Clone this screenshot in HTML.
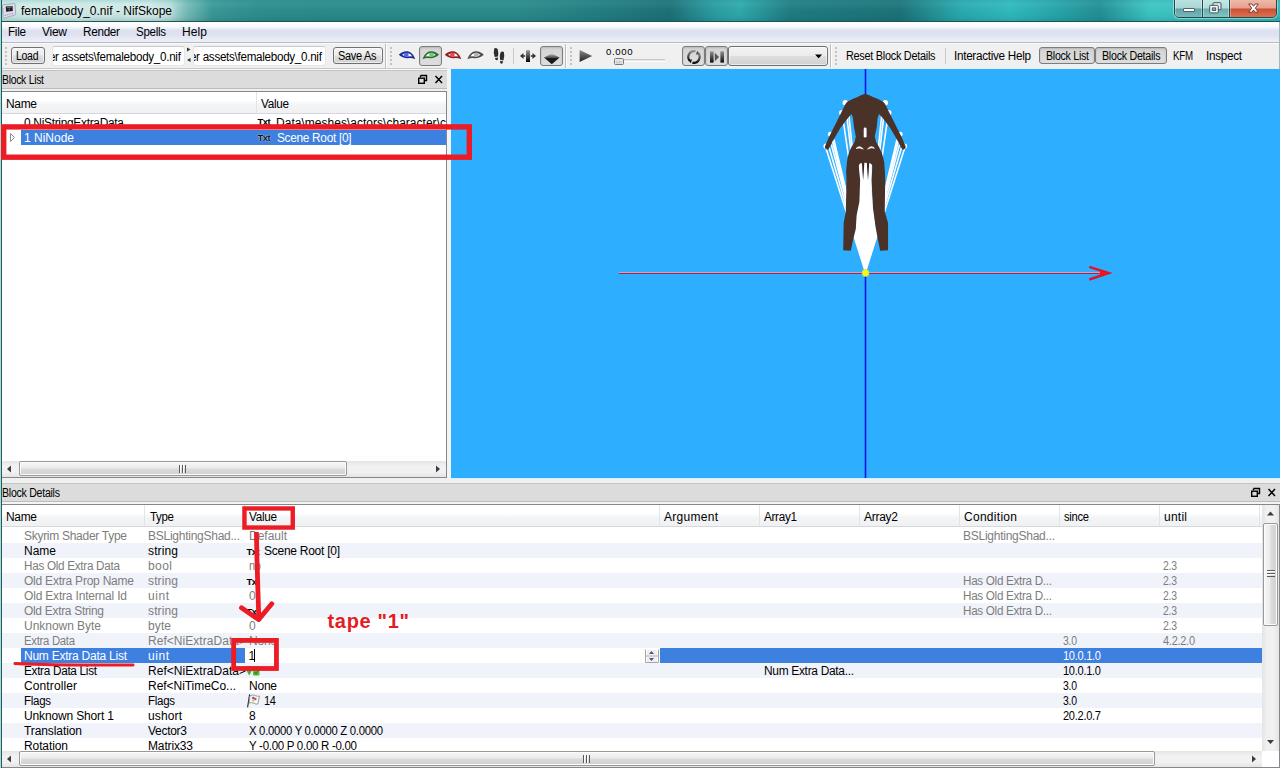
<!DOCTYPE html>
<html><head><meta charset="utf-8"><title>femalebody_0.nif - NifSkope</title>
<style>
html,body{margin:0;padding:0}
body{width:1280px;height:768px;position:relative;overflow:hidden;background:#f0f0f0;font-family:"Liberation Sans",sans-serif;font-size:12px}
.a{position:absolute}
.t{position:absolute;white-space:pre}
.btn{position:absolute;box-sizing:border-box;border:1px solid #707070;border-radius:3px;background:linear-gradient(#f4f4f4 0%,#ececec 48%,#dedede 52%,#d2d2d2 100%);box-shadow:inset 0 0 0 1px rgba(255,255,255,.55)}
.pbtn{position:absolute;box-sizing:border-box;border:1px solid #7c7c7c;border-radius:3px;background:linear-gradient(#d4d4d4,#dedede);box-shadow:inset 0 1px 2px #b8b8b8}
.edit{position:absolute;box-sizing:border-box;background:#fff;border:1px solid #e3e6ea;border-top-color:#c6c9cf;border-radius:3px;overflow:hidden}
.hdr{position:absolute;background:linear-gradient(#fff 0%,#fff 40%,#f3f4f6 60%,#f0f1f3 100%);border-bottom:1px solid #d6d8db;box-sizing:border-box}
.sbh{position:absolute;background:linear-gradient(#e4e4e4,#f1f1f1 30%,#f1f1f1 70%,#e4e4e4)}
.thh{position:absolute;box-sizing:border-box;border:1px solid #989898;border-radius:2px;background:linear-gradient(#f6f6f6 0%,#ebebeb 48%,#dcdcdc 52%,#d0d0d0 100%);box-shadow:inset 0 0 0 1px #fcfcfc}
.thv{position:absolute;box-sizing:border-box;border:1px solid #989898;border-radius:2px;background:linear-gradient(90deg,#f6f6f6 0%,#ebebeb 48%,#dcdcdc 52%,#d0d0d0 100%);box-shadow:inset 0 0 0 1px #fcfcfc}
.hd{position:absolute;width:2px;background:repeating-linear-gradient(#c2c2c2 0,#c2c2c2 2px,transparent 2px,transparent 4px)}
</style></head><body>
<!-- ================= TITLE BAR ================= -->
<div class="a" style="left:0;top:0;width:1280px;height:22px;background:linear-gradient(90deg,#3c9a98 0px,#3c9a98 200px,#2d8d8d 260px,#2a8a8a 330px,#2b8a8b 520px,#237d80 600px,#1e7076 670px,#2a9da3 715px,#2fa8ad 740px,#1f7c82 790px,#1c7278 900px,#2aa9ae 960px,#30b9bd 1010px,#27a3a8 1060px,#238f95 1100px,#3ec4c4 1150px,#36b5b6 1280px)"></div>
<div class="a" style="left:0;top:0;width:230px;height:22px;background:linear-gradient(90deg,rgba(208,234,231,.97) 0,rgba(208,234,231,.97) 150px,rgba(200,230,227,.85) 170px,rgba(180,222,218,.45) 188px,rgba(160,210,208,0) 212px)"></div>
<div class="a" style="left:0;top:0;width:1280px;height:22px;background:linear-gradient(rgba(60,170,165,.2) 0,rgba(255,255,255,.06) 4px,rgba(255,255,255,0) 10px,rgba(0,60,60,.06) 17px,rgba(0,60,60,.16) 21px)"></div>
<div class="a" style="left:0;top:21px;width:1280px;height:1px;background:#1c5557"></div>
<!-- app icon -->
<svg class="a" style="left:0;top:0" width="20" height="22" viewBox="0 0 20 22"><path d="M2.300 5.600 Q2.300 4.800 3.200 4.700 L14 3.500 Q15.100 3.400 15.200 4.400 L15.600 13.800 Q15.600 14.700 14.700 15 L4.300 18.200 Q3.300 18.400 3.200 17.400 Z" fill="#dcdcec" stroke="#9c9cb4" stroke-width=".8"/><path d="M5.800 6.600 L12.600 5.900 L12.800 10.900 L6.100 11.700Z" fill="#1c1c20"/><path d="M7 6.700 L11.800 6.200 L11.850 7.600 L7.050 8.150Z" fill="#4d8a4a"/><path d="M8.600 8.400 L10 8.250 L10.050 10.300 L8.650 10.450Z" fill="#5a5a62"/><g fill="#b48ab0"><circle cx="5.400" cy="15.400" r=".7"/><circle cx="7.800" cy="14.700" r=".7"/><circle cx="10.200" cy="14" r=".7"/><circle cx="12.500" cy="13.400" r=".7"/></g><path d="M2.400 8.500 h1.200 M2.500 10.500 h1.200 M2.600 12.500 h1.200" stroke="#9c9cb4" stroke-width=".7"/></svg>
<!-- window buttons -->
<div class="a" style="left:1174px;top:-4px;width:103px;height:22px;box-sizing:border-box;border:1px solid #1f4a4e;border-radius:0 0 5px 5px;overflow:hidden;box-shadow:0 0 0 1px rgba(255,255,255,.4)">
 <div class="a" style="left:0;top:0;width:27px;height:21px;background:linear-gradient(#c4e6e4 0,#a9d6d5 11px,#5fa3a5 12px,#7bbcbc 21px);border-right:1px solid #1f4a4e;box-shadow:inset 0 0 0 1px rgba(255,255,255,.35)"></div>
 <div class="a" style="left:28px;top:0;width:26px;height:21px;background:linear-gradient(#c9eae8 0,#b2dddc 11px,#68adaf 12px,#86c6c5 21px);border-right:1px solid #1f4a4e;box-shadow:inset 0 0 0 1px rgba(255,255,255,.35)"></div>
 <div class="a" style="left:55px;top:0;width:47px;height:21px;background:linear-gradient(#f2c2b4 0,#e5a08e 11px,#cc4f33 12px,#dd7555 21px);box-shadow:inset 0 0 0 1px rgba(255,255,255,.3)"></div>
</div>
<svg class="a" style="left:1174px;top:0" width="104" height="18" viewBox="0 0 104 18">
 <rect x="9.500" y="8.500" width="11" height="3" rx="0.500" fill="#fff" stroke="#50646a" stroke-width="1"/>
 <rect x="39" y="2.700" width="8" height="7" rx=".8" fill="#e8f2f2" stroke="#3e5358" stroke-width="1"/>
 <rect x="35.700" y="5.300" width="8.600" height="7.600" rx=".8" fill="#f4fafa" stroke="#3e5358" stroke-width="1"/>
 <rect x="38.300" y="7.900" width="3.400" height="2.600" fill="#7fb5b7" stroke="#3e5358" stroke-width=".9"/>
 <path d="M74.700 4 L77.900 4 L79.500 6.300 L81.100 4 L84.300 4 L81.300 8.100 L84.300 12.200 L81.100 12.200 L79.500 9.900 L77.900 12.200 L74.700 12.200 L77.700 8.100 Z" fill="#fff" stroke="#6a3028" stroke-width=".9" stroke-linejoin="round"/>
</svg>
<!-- ================= MENU BAR ================= -->
<div class="a" style="left:2px;top:22px;width:1277px;height:20px;background:linear-gradient(#fff 0,#fbfbfd 4px,#e9ecf6 7px,#dde1f0 8px,#dde1f0 13px,#e6e9f4 16px,#eef0f8 20px)"></div>
<div class="a" style="left:2px;top:42px;width:1277px;height:1px;background:#b9bbc4"></div>
<!-- ================= TOOLBAR ================= -->
<div class="a" style="left:2px;top:43px;width:1277px;height:26px;background:#f0f0f0"></div>
<div class="a" style="left:2px;top:43px;width:1277px;height:1px;background:#fafafa"></div>
<div class="hd" style="left:5px;top:47px;height:18px"></div>
<div class="btn" style="left:11px;top:47px;width:34px;height:17px"></div>
<div class="edit" style="left:52px;top:46px;width:133px;height:20px"><span class="a" style="right:3.500px;top:3.200px;white-space:pre;line-height:14px;letter-spacing:-.3px;transform:scaleX(.971);transform-origin:100% 0">er assets\femalebody_0.nif</span></div>
<svg class="a" style="left:185px;top:46px" width="7" height="19" viewBox="0 0 7 19"><path d="M2 1.500 L5.500 3.500 L2 5.500Z M5.500 12 L2 14 L5.500 16Z" fill="#333"/></svg>
<div class="edit" style="left:193px;top:46px;width:133px;height:20px"><span class="a" style="right:3.700px;top:3.200px;white-space:pre;line-height:14px;letter-spacing:-.3px;transform:scaleX(.971);transform-origin:100% 0">er assets\femalebody_0.nif</span></div>
<div class="btn" style="left:333px;top:47px;width:50px;height:17px"></div>
<div class="a" style="left:385px;top:44px;width:1px;height:24px;background:#bebebe"></div><div class="a" style="left:386px;top:44px;width:1px;height:24px;background:#fcfcfc"></div>
<div class="hd" style="left:390px;top:47px;height:18px"></div>
<svg class="a" style="left:392px;top:44px" width="120" height="24" viewBox="392 44 120 24"><g transform="translate(399,51.2)"><path d="M-0.200 3.600 Q3.500 -0.500 8.500 0 Q13.800 0.800 16.300 8 Q12.500 6.200 8.500 7 Q3.500 7 -0.200 3.600Z" fill="#1c2b94"/><path d="M3 3.600 Q5.200 1.700 8.500 1.700 Q11.600 2 13.300 5.200 Q11 4.700 8.500 5.200 Q5.200 5.400 3 3.600Z" fill="#fff"/><ellipse cx="7.300" cy="3.500" rx="2.400" ry="2.300" fill="#5068ea"/></g></svg><div class="pbtn" style="left:419px;top:46px;width:23px;height:20px"></div><svg class="a" style="left:392px;top:44px" width="120" height="24" viewBox="392 44 120 24"><g transform="translate(438.8,51.2) scale(-1,1)"><path d="M-0.200 3.600 Q3.500 -0.500 8.500 0 Q13.800 0.800 16.300 8 Q12.500 6.200 8.500 7 Q3.500 7 -0.200 3.600Z" fill="#2d6a36"/><path d="M3 3.600 Q5.200 1.700 8.500 1.700 Q11.600 2 13.300 5.200 Q11 4.700 8.500 5.200 Q5.200 5.400 3 3.600Z" fill="#fff"/><ellipse cx="7.300" cy="3.500" rx="2.400" ry="2.300" fill="#5fd071"/></g><g transform="translate(445,51.2)"><path d="M-0.200 3.600 Q3.500 -0.500 8.500 0 Q13.800 0.800 16.300 8 Q12.500 6.200 8.500 7 Q3.500 7 -0.200 3.600Z" fill="#8e1c1c"/><path d="M3 3.600 Q5.200 1.700 8.500 1.700 Q11.600 2 13.300 5.200 Q11 4.700 8.500 5.200 Q5.200 5.400 3 3.600Z" fill="#fff"/><ellipse cx="7.300" cy="3.500" rx="2.400" ry="2.300" fill="#ea4a4a"/></g><g transform="translate(483.6,51.2) scale(-1,1)"><path d="M-0.200 3.600 Q3.500 -0.500 8.500 0 Q13.800 0.800 16.300 8 Q12.500 6.200 8.500 7 Q3.500 7 -0.200 3.600Z" fill="#4c4c4c"/><path d="M3 3.600 Q5.200 1.700 8.500 1.700 Q11.600 2 13.300 5.200 Q11 4.700 8.500 5.200 Q5.200 5.400 3 3.600Z" fill="#fff"/><ellipse cx="7.300" cy="3.500" rx="2.400" ry="2.300" fill="#b4b4b4"/></g><g fill="#2e2e2e"><path d="M494.200 48.600 Q496 47.200 497.600 49.200 Q498.800 52.800 498 56.400 L494.700 57 Q493.200 52.400 494.200 48.600Z"/><path d="M494.900 58 L498 57.400 Q498.400 59.800 497 60.300 Q495.200 60.400 494.900 58Z"/><path d="M503.900 52 Q502.100 50.600 500.500 52.600 Q499.300 56.200 500.100 59.800 L503.400 60.400 Q504.900 55.800 503.900 52Z"/><path d="M503.200 61.400 L500.100 60.800 Q499.700 63.200 501.100 63.700 Q502.900 63.800 503.200 61.400Z"/></g></svg>
<div class="a" style="left:513px;top:48px;width:1px;height:16px;background:#c8c8c8"></div>
<svg class="a" style="left:516px;top:44px" width="24" height="24" viewBox="516 44 24 24"><defs><linearGradient id="gk" x1="0" y1="0" x2="0" y2="1"><stop offset="0" stop-color="#9a9a9a"/><stop offset="1" stop-color="#000"/></linearGradient></defs><rect x="526" y="50.200" width="4" height="11.800" fill="url(#gk)"/><path d="M520 56 L523.500 53 L523.500 55.200 L525.200 55.200 L525.200 56.800 L523.500 56.800 L523.500 59Z" fill="#333"/><path d="M536 56 L532.500 53 L532.500 55.200 L530.800 55.200 L530.800 56.800 L532.500 56.800 L532.500 59Z" fill="#333"/></svg><div class="pbtn" style="left:540px;top:46px;width:23px;height:20px"></div><svg class="a" style="left:540px;top:46px" width="23" height="20" viewBox="540 46 23 20"><defs><linearGradient id="gd" x1="0" y1="0" x2="0" y2="1"><stop offset="0" stop-color="#c8c8c8"/><stop offset="1" stop-color="#4a4a4a"/></linearGradient></defs><path d="M551.800 53.600 L559.600 57.600 L544 57.600Z" fill="url(#gd)"/><path d="M544 57.600 L559.600 57.600 L551.800 64.300Z" fill="#1a1a1a"/></svg>
<div class="a" style="left:565px;top:44px;width:1px;height:24px;background:#bebebe"></div><div class="a" style="left:566px;top:44px;width:1px;height:24px;background:#fcfcfc"></div>
<div class="hd" style="left:570px;top:47px;height:18px"></div>
<svg class="a" style="left:576px;top:44px" width="100" height="24" viewBox="576 44 100 24"><defs><linearGradient id="gp" x1="0" y1="0" x2="0" y2="1"><stop offset="0" stop-color="#8a8a8a"/><stop offset="1" stop-color="#222"/></linearGradient></defs><path d="M579.600 50 L592.200 56 L579.600 62Z" fill="url(#gp)"/><rect x="619" y="59.500" width="46" height="1" fill="#a4a4a4"/><rect x="619" y="60.500" width="46" height="1.500" fill="#fdfdfd"/><rect x="614.500" y="58.500" width="9" height="6" rx="1" fill="#e6e6e6" stroke="#7a7a7a"/><rect x="616" y="61" width="6" height="2.500" fill="#d0d0d0"/></svg><div class="pbtn" style="left:682px;top:46px;width:23px;height:20px"></div><div class="pbtn" style="left:705px;top:46px;width:23px;height:20px"></div><div class="btn" style="left:728px;top:46px;width:100px;height:20px;background:linear-gradient(#f3f3f3 0%,#ececec 48%,#dedede 52%,#d0d0d0 100%)"></div><svg class="a" style="left:682px;top:46px" width="146" height="20" viewBox="682 46 146 20"><defs><linearGradient id="gl" x1="0" y1="0" x2="0" y2="1"><stop offset="0" stop-color="#909090"/><stop offset="1" stop-color="#0c0c0c"/></linearGradient></defs><path d="M695.500 51.300 A5.800 5.800 0 0 0 689.600 60.600" fill="none" stroke="url(#gl)" stroke-width="2.200"/><path d="M692.400 62.600 A5.800 5.800 0 0 0 698.300 53.300" fill="none" stroke="url(#gl)" stroke-width="2.200"/><path d="M697.300 50.800 L699.800 54.300 L695.800 54.600Z" fill="#555"/><path d="M690.600 63.200 L688.100 59.700 L692.100 59.400Z" fill="#111"/><rect x="710" y="51.400" width="3.600" height="11.200" fill="url(#gl)"/><rect x="720.400" y="51.400" width="3.600" height="11.200" fill="url(#gl)"/><path d="M714.800 52.800 L719 57 L714.800 61.200Z" fill="#555"/><path d="M815 54.500 L822.200 54.500 L818.600 58.300Z" fill="#000"/></svg>
<div class="a" style="left:830px;top:44px;width:1px;height:24px;background:#bebebe"></div><div class="a" style="left:831px;top:44px;width:1px;height:24px;background:#fcfcfc"></div>
<div class="hd" style="left:835px;top:47px;height:18px"></div>
<div class="a" style="left:945px;top:48px;width:1px;height:16px;background:#c8c8c8"></div>
<div class="pbtn" style="left:1039px;top:47px;width:56px;height:17px"></div>
<div class="pbtn" style="left:1095px;top:47px;width:72px;height:17px"></div>
<div class="a" style="left:2px;top:68px;width:445px;height:1px;background:#c8c8c8"></div><div class="a" style="left:447px;top:68px;width:833px;height:1px;background:#e6eef3"></div>
<!-- ================= BLOCK LIST DOCK ================= -->
<div class="a" style="left:2px;top:69px;width:445px;height:1px;background:#fbfbfb"></div>
<div class="a" style="left:2px;top:70px;width:445px;height:19px;background:#dcdcdc;border-top:1px solid #c4c4c4;border-bottom:1px solid #bcbcbc;box-sizing:border-box"></div>
<svg class="a" style="left:417px;top:74px" width="27" height="11" viewBox="0 0 27 11"><path d="M3.500 1.500 H9.500 V6.500 H7.500 M3.500 1.500 V3.500" fill="none" stroke="#000" stroke-width="1.400"/><rect x="1.700" y="4.200" width="5.600" height="5.100" fill="#dcdcdc" stroke="#000" stroke-width="1.400"/><path d="M18.500 2 L25 9 M25 2 L18.500 9" stroke="#000" stroke-width="1.500"/></svg>
<div class="a" style="left:1px;top:91px;width:446px;height:387px;box-sizing:border-box;border:1px solid #828790;background:#fff"></div>
<div class="hdr" style="left:2px;top:92px;width:444px;height:22px"></div>
<div class="a" style="left:256px;top:92px;width:1px;height:21px;background:#e2e4e8"></div>
<div class="a" style="left:21px;top:130px;width:425px;height:15px;background:#3d80df"></div>
<svg class="a" style="left:9px;top:132px" width="7" height="11" viewBox="0 0 7 11"><path d="M1.500 1.500 L5.500 5.500 L1.500 9.500Z" fill="#fff" stroke="#8c8c8c" stroke-width="1"/></svg>
<span class="t" style="left:257.500px;top:117.400px;font-size:9.500px;font-weight:bold;letter-spacing:-.6px;line-height:9px">Txt</span>
<span class="t" style="left:257.500px;top:133.400px;font-size:9.500px;font-weight:bold;letter-spacing:-.6px;line-height:9px;color:#111;text-shadow:0 0 1px #cfe0f8,0 0 1px #cfe0f8">Txt</span>
<!-- h scrollbar block list -->
<div class="sbh" style="left:2px;top:461px;width:444px;height:16px"></div>
<svg class="a" style="left:3px;top:461px" width="443" height="16" viewBox="0 0 443 16"><path d="M8 4.500 L4 8 L8 11.500Z" fill="#3c3c3c"/><path d="M433 4.500 L437 8 L433 11.500Z" fill="#3c3c3c"/></svg>
<div class="thh" style="left:19px;top:461px;width:328px;height:15px"></div>
<div class="a" style="left:179px;top:465px;width:7px;height:8px;background:repeating-linear-gradient(90deg,#5a5a5a 0,#5a5a5a 1px,#fff 1px,#fff 2px,transparent 2px,transparent 3px)"></div>
<!-- splitter -->
<div class="a" style="left:447px;top:69px;width:4px;height:410px;background:#f4f4f4"></div>
<!-- ================= 3D VIEW ================= -->
<div class="a" style="left:451px;top:69px;width:829px;height:409px;background:#2eaeff"></div>
<svg class="a" style="left:452px;top:69px" width="828" height="409" viewBox="452 69 828 409">
 <line x1="865.500" y1="69" x2="865.500" y2="478" stroke="#0a14e6" stroke-width="1.600"/>
 <g transform="translate(810,80) scale(0.14323)">
  <!-- bone lines converging to origin -->
  <g stroke="#fff" stroke-width="11" stroke-linecap="round" fill="none">
   <path d="M387 1340 L108 466 M387 1340 L124 440 M387 1340 L146 382 M387 1340 L168 420 M387 1340 L150 455"/>
   <path d="M387 1340 L664 466 M387 1340 L648 440 M387 1340 L628 382 M387 1340 L606 420 M387 1340 L624 455"/>
   <path d="M387 1340 L246 162 M387 1340 L224 228 M387 1340 L268 215"/>
   <path d="M387 1340 L526 162 M387 1340 L548 228 M387 1340 L504 215"/>
  </g>
  <g fill="#fff">
   <circle cx="246" cy="158" r="19"/><circle cx="222" cy="228" r="19"/><circle cx="142" cy="378" r="17"/><circle cx="112" cy="462" r="18"/>
   <circle cx="526" cy="158" r="19"/><circle cx="550" cy="228" r="19"/><circle cx="630" cy="378" r="17"/><circle cx="660" cy="462" r="18"/>
   <path d="M387 1345 L308 1098 L340 800 L340 555 L432 555 L432 800 L467 1098 Z"/>
  </g>
  <path d="M362 560 L380 560 L376 640 L371 700 L366 640 Z M396 560 L414 560 L410 640 L405 700 L400 640 Z" fill="#3a2620"/>
  <!-- body -->
  <path fill="#4a3228" d="M352 108 Q385 86 418 108 L440 118 L475 132 L505 148 Q525 160 538 195 L565 250 L600 320 L640 400 L668 465 Q672 480 655 486 Q645 488 638 475 L615 430 L560 335 L505 262 L482 238 L472 265 L466 330 L452 395 Q455 430 480 465 Q508 510 518 570 L523 640 L525 698 L522 918 L545 998 L545 1188 L490 1193 L475 1118 L460 1038 L440 898 L430 698 L435 610 Q436 584 418 581 L385 577 L354 581 Q340 584 341 610 L350 698 L345 848 L325 948 L320 1038 L300 1118 L285 1193 L232 1188 L235 998 L250 918 L255 698 L252 640 L258 570 Q265 510 292 465 Q318 430 320 395 L307 330 L300 265 L290 238 L268 262 L212 335 L157 430 L135 475 Q127 488 117 486 Q100 480 104 465 L132 400 L172 320 L207 250 L234 195 Q247 160 267 148 L297 132 L332 118 Z"/>
  <path d="M385 342 L385 392" stroke="#fff" stroke-width="20" stroke-linecap="round"/>
  <path d="M322 478 Q345 452 372 482 Q345 470 322 478Z M402 482 Q428 452 450 476 Q428 468 402 482Z" fill="#fff" stroke="#fff" stroke-width="5"/>
 </g>
 <!-- x axis -->
 <rect x="619" y="272" width="486" height="1" fill="#e09ab8"/>
 <rect x="619" y="273" width="486" height="1" fill="#8c2c60"/>
 <path d="M1089.300 266.900 L1108.600 273.100 L1089.300 279.500" fill="none" stroke="#e61220" stroke-width="2.500" stroke-linejoin="miter"/>
 <path d="M1100 271.200 L1110.500 273.100 L1100 275.200Z" fill="#f0141e"/>
 <circle cx="865.500" cy="273" r="3.900" fill="#9be25a" opacity=".8"/>
 <circle cx="865.500" cy="273" r="3.200" fill="#fbf61a"/>
</svg>

<!-- ================= BLOCK DETAILS DOCK ================= -->
<div class="a" style="left:2px;top:478px;width:1278px;height:5px;background:#f0f0f0"></div><div class="a" style="left:451px;top:478px;width:829px;height:1px;background:#d4f0fb"></div>
<div class="a" style="left:2px;top:483px;width:1278px;height:19px;background:#dcdcdc;border-top:1px solid #c4c4c4;border-bottom:1px solid #bcbcbc;box-sizing:border-box"></div>
<div class="a" style="left:2px;top:502px;width:1278px;height:2px;background:#f4f4f4"></div>
<svg class="a" style="left:1250px;top:487px" width="27" height="11" viewBox="0 0 27 11"><path d="M3.500 1.500 H9.500 V6.500 H7.500 M3.500 1.500 V3.500" fill="none" stroke="#000" stroke-width="1.400"/><rect x="1.700" y="4.200" width="5.600" height="5.100" fill="#dcdcdc" stroke="#000" stroke-width="1.400"/><path d="M18.500 2 L25 9 M25 2 L18.500 9" stroke="#000" stroke-width="1.500"/></svg>
<div class="a" style="left:1px;top:504px;width:1279px;height:264px;box-sizing:border-box;border:1px solid #828790;background:#fff"></div>
<div class="hdr" style="left:2px;top:505px;width:1260px;height:22px"></div>
<div class="a" style="left:2px;top:543px;width:1260px;height:15px;background:#f1f3fa"></div>
<div class="a" style="left:2px;top:573px;width:1260px;height:15px;background:#f1f3fa"></div>
<div class="a" style="left:2px;top:603px;width:1260px;height:15px;background:#f1f3fa"></div>
<div class="a" style="left:2px;top:633px;width:1260px;height:15px;background:#f1f3fa"></div>
<div class="a" style="left:2px;top:663px;width:1260px;height:15px;background:#f1f3fa"></div>
<div class="a" style="left:2px;top:693px;width:1260px;height:15px;background:#f1f3fa"></div>
<div class="a" style="left:2px;top:723px;width:1260px;height:15px;background:#f1f3fa"></div>
<div class="a" style="left:21px;top:648px;width:224px;height:15px;background:#3d80df"></div>
<div class="a" style="left:660px;top:648px;width:602px;height:15px;background:#3d80df"></div>
<div class="a" style="left:245px;top:648px;width:415px;height:15px;background:#fff"></div>
<div class="a" style="left:144px;top:505px;width:1px;height:21px;background:#e2e4e8"></div>
<div class="a" style="left:244px;top:505px;width:1px;height:21px;background:#e2e4e8"></div>
<div class="a" style="left:659px;top:505px;width:1px;height:21px;background:#e2e4e8"></div>
<div class="a" style="left:759px;top:505px;width:1px;height:21px;background:#e2e4e8"></div>
<div class="a" style="left:859px;top:505px;width:1px;height:21px;background:#e2e4e8"></div>
<div class="a" style="left:959px;top:505px;width:1px;height:21px;background:#e2e4e8"></div>
<div class="a" style="left:1059px;top:505px;width:1px;height:21px;background:#e2e4e8"></div>
<div class="a" style="left:1159px;top:505px;width:1px;height:21px;background:#e2e4e8"></div>
<div class="a" style="left:1259px;top:505px;width:1px;height:21px;background:#e2e4e8"></div>
<span class="t" style="left:246.5px;top:546.8px;font-size:9.500px;font-weight:bold;letter-spacing:-.6px;line-height:9px;color:#000;">Txt</span><span class="t" style="left:246.5px;top:576.8px;font-size:9.500px;font-weight:bold;letter-spacing:-.6px;line-height:9px;color:#000;">Txt</span><span class="t" style="left:246.5px;top:606.8px;font-size:9.500px;font-weight:bold;letter-spacing:-.6px;line-height:9px;color:#000;">Txt</span><svg class="a" style="left:644px;top:648px" width="16" height="16" viewBox="644 648 16 16"><path d="M645.500 649.500 V662.500 H658.500 V649.500 M645.500 656 H658.500" fill="none" stroke="#a6a6a6" stroke-width="1"/><rect x="647" y="650" width="10" height="5" fill="#efeff2"/><rect x="647" y="657" width="10" height="5" fill="#efeff2"/><path d="M649 654 L651.500 651 L654 654Z M649 658 L654 658 L651.500 661Z" fill="#55557f"/></svg><div class="a" style="left:254px;top:649px;width:1px;height:13px;background:#000"></div><svg class="a" style="left:246px;top:664px" width="15" height="13" viewBox="246 664 15 13"><path d="M247 666 H251.500 L251.500 671.500 L249.200 675.500 L247 671.500Z" fill="#48b032"/><rect x="253" y="666" width="6.500" height="9.500" rx="1" fill="#53b93c"/><path d="M254.500 672 L256 674 L258.500 670" stroke="#2c8a1c" stroke-width="1.200" fill="none"/></svg><svg class="a" style="left:246px;top:693px" width="15" height="15" viewBox="246 693 15 15"><path d="M249.600 694.300 L247.600 707.300" stroke="#222" stroke-width="1.100" fill="none"/><path d="M250 695.800 Q253 694.200 255.500 695.600 Q257.500 696.800 259.500 696 L258 703.800 Q256 704.800 254 703.300 Q251.500 702 249 703Z" fill="#f4f4f4" stroke="#8a8a8a" stroke-width=".8"/><circle cx="253.300" cy="698" r="1.300" fill="#4a63d0"/><circle cx="255.300" cy="699" r="1.200" fill="#e0463a"/><circle cx="253.200" cy="700.600" r="1.100" fill="#d8c43a"/></svg>
<!-- v scrollbar -->
<div class="a" style="left:1262px;top:505px;width:17px;height:246px;background:linear-gradient(90deg,#e4e4e4,#f1f1f1 30%,#f1f1f1 70%,#e4e4e4)"></div>
<svg class="a" style="left:1262px;top:505px" width="17" height="246" viewBox="0 0 17 246"><path d="M5 10.500 L8.500 6.500 L12 10.500Z" fill="#3c3c3c"/><path d="M5 235 L8.500 239 L12 235Z" fill="#3c3c3c"/></svg>
<div class="thv" style="left:1263px;top:523px;width:15px;height:103px"></div>
<div class="a" style="left:1267px;top:570px;width:8px;height:7px;background:repeating-linear-gradient(#5a5a5a 0,#5a5a5a 1px,#fff 1px,#fff 2px,transparent 2px,transparent 3px)"></div>
<!-- h scrollbar -->
<div class="sbh" style="left:2px;top:751px;width:1260px;height:16px"></div>
<svg class="a" style="left:3px;top:751px" width="1259" height="16" viewBox="0 0 1259 16"><path d="M8 4.500 L4 8 L8 11.500Z" fill="#3c3c3c"/><path d="M1249 4.500 L1253 8 L1249 11.500Z" fill="#3c3c3c"/></svg>
<div class="thh" style="left:19px;top:751px;width:1136px;height:15px"></div>
<div class="a" style="left:583px;top:755px;width:7px;height:8px;background:repeating-linear-gradient(90deg,#5a5a5a 0,#5a5a5a 1px,#fff 1px,#fff 2px,transparent 2px,transparent 3px)"></div>
<div class="a" style="left:1262px;top:751px;width:17px;height:16px;background:#fff"></div>
<!-- window side borders -->
<div class="a" style="left:0;top:0;width:1px;height:768px;background:#a4dcd8"></div>
<div class="a" style="left:1px;top:0;width:1px;height:768px;background:#255c5e"></div>
<div class="a" style="left:1279px;top:22px;width:1px;height:47px;background:#9fb9be"></div>

<span class="t" style="left:21px;top:3.84px;font-size:12px;line-height:14px;color:#000;letter-spacing:0.010px;text-shadow:0 0 5px #e4f4f2,0 0 8px #e4f4f2;">femalebody_0.nif - NifSkope</span>
<span class="t" style="left:8px;top:24.84px;font-size:12px;line-height:14px;color:#000;letter-spacing:-0.300px;transform:scaleX(0.9759);transform-origin:0 0;">File</span>
<span class="t" style="left:42px;top:24.84px;font-size:12px;line-height:14px;color:#000;letter-spacing:-0.266px;">View</span>
<span class="t" style="left:83px;top:24.84px;font-size:12px;line-height:14px;color:#000;letter-spacing:-0.300px;transform:scaleX(0.9773);transform-origin:0 0;">Render</span>
<span class="t" style="left:136px;top:24.84px;font-size:12px;line-height:14px;color:#000;letter-spacing:-0.300px;transform:scaleX(0.9619);transform-origin:0 0;">Spells</span>
<span class="t" style="left:182px;top:24.84px;font-size:12px;line-height:14px;color:#000;letter-spacing:0.104px;">Help</span>
<span class="t" style="left:15.5px;top:48.84px;font-size:12px;line-height:14px;color:#000;letter-spacing:-0.300px;transform:scaleX(0.8720);transform-origin:0 0;">Load</span>
<span class="t" style="left:337.5px;top:48.84px;font-size:12px;line-height:14px;color:#000;letter-spacing:-0.300px;transform:scaleX(0.9116);transform-origin:0 0;">Save As</span>
<span class="t" style="left:606px;top:46.27px;font-size:9.6px;line-height:11.6px;color:#000;letter-spacing:0.621px;">0.000</span>
<span class="t" style="left:845.5px;top:48.84px;font-size:12px;line-height:14px;color:#000;letter-spacing:-0.300px;transform:scaleX(0.9073);transform-origin:0 0;">Reset Block Details</span>
<span class="t" style="left:954px;top:48.84px;font-size:12px;line-height:14px;color:#000;letter-spacing:-0.300px;transform:scaleX(0.9762);transform-origin:0 0;">Interactive Help</span>
<span class="t" style="left:1045.5px;top:49.34px;font-size:12px;line-height:14px;color:#000;letter-spacing:-0.300px;transform:scaleX(0.8837);transform-origin:0 0;">Block List</span>
<span class="t" style="left:1101.5px;top:49.34px;font-size:12px;line-height:14px;color:#000;letter-spacing:-0.300px;transform:scaleX(0.8896);transform-origin:0 0;">Block Details</span>
<span class="t" style="left:1172.5px;top:48.84px;font-size:12px;line-height:14px;color:#000;letter-spacing:-0.300px;transform:scaleX(0.8083);transform-origin:0 0;">KFM</span>
<span class="t" style="left:1205.5px;top:48.84px;font-size:12px;line-height:14px;color:#000;letter-spacing:-0.300px;transform:scaleX(0.9755);transform-origin:0 0;">Inspect</span>
<span class="t" style="left:2px;top:72.84px;font-size:12px;line-height:14px;color:#000;letter-spacing:-0.300px;transform:scaleX(0.8631);transform-origin:0 0;">Block List</span>
<span class="t" style="left:2px;top:485.84px;font-size:12px;line-height:14px;color:#000;letter-spacing:-0.300px;transform:scaleX(0.8820);transform-origin:0 0;">Block Details</span>
<span class="t" style="left:6px;top:96.84px;font-size:12px;line-height:14px;color:#000;letter-spacing:-0.300px;transform:scaleX(0.9963);transform-origin:0 0;">Name</span>
<span class="t" style="left:261px;top:96.84px;font-size:12px;line-height:14px;color:#000;letter-spacing:-0.300px;transform:scaleX(0.9786);transform-origin:0 0;">Value</span>
<span class="t" style="left:24px;top:115.54px;font-size:12px;line-height:14px;color:#000;letter-spacing:-0.300px;transform:scaleX(0.9936);transform-origin:0 0;">0 NiStringExtraData</span>
<span class="t" style="left:276px;top:115.54px;font-size:12px;line-height:14px;color:#000;letter-spacing:0.020px;">Data\meshes\actors\character\c</span>
<span class="t" style="left:24px;top:130.84px;font-size:12px;line-height:14px;color:#fff;">1 NiNode</span>
<span class="t" style="left:276.5px;top:130.84px;font-size:12px;line-height:14px;color:#fff;letter-spacing:-0.300px;transform:scaleX(0.9869);transform-origin:0 0;">Scene Root [0]</span>
<span class="t" style="left:6px;top:509.64px;font-size:12px;line-height:14px;color:#000;letter-spacing:-0.300px;transform:scaleX(0.9963);transform-origin:0 0;">Name</span>
<span class="t" style="left:150px;top:509.64px;font-size:12px;line-height:14px;color:#000;letter-spacing:-0.300px;transform:scaleX(0.9556);transform-origin:0 0;">Type</span>
<span class="t" style="left:249px;top:509.64px;font-size:12px;line-height:14px;color:#000;letter-spacing:-0.300px;transform:scaleX(0.9786);transform-origin:0 0;">Value</span>
<span class="t" style="left:664px;top:509.64px;font-size:12px;line-height:14px;color:#000;letter-spacing:0.281px;">Argument</span>
<span class="t" style="left:764px;top:509.64px;font-size:12px;line-height:14px;color:#000;letter-spacing:-0.300px;transform:scaleX(0.9751);transform-origin:0 0;">Array1</span>
<span class="t" style="left:864px;top:509.64px;font-size:12px;line-height:14px;color:#000;letter-spacing:-0.269px;">Array2</span>
<span class="t" style="left:964px;top:509.64px;font-size:12px;line-height:14px;color:#000;letter-spacing:0.287px;">Condition</span>
<span class="t" style="left:1064px;top:509.64px;font-size:12px;line-height:14px;color:#000;letter-spacing:-0.300px;transform:scaleX(0.9323);transform-origin:0 0;">since</span>
<span class="t" style="left:1164px;top:509.64px;font-size:12px;line-height:14px;color:#000;letter-spacing:0.246px;">until</span>
<span class="t" style="left:24px;top:528.84px;font-size:12px;line-height:14px;color:#7d7d7d;letter-spacing:-0.284px;">Skyrim Shader Type</span>
<span class="t" style="left:148px;top:528.84px;font-size:12px;line-height:14px;color:#7d7d7d;letter-spacing:-0.255px;">BSLightingShad...</span>
<span class="t" style="left:249px;top:528.84px;font-size:12px;line-height:14px;color:#7d7d7d;letter-spacing:-0.005px;">Default</span>
<span class="t" style="left:24px;top:543.84px;font-size:12px;line-height:14px;color:#000;letter-spacing:-0.005px;">Name</span>
<span class="t" style="left:148px;top:543.84px;font-size:12px;line-height:14px;color:#000;letter-spacing:0.131px;">string</span>
<span class="t" style="left:24px;top:558.84px;font-size:12px;line-height:14px;color:#7d7d7d;letter-spacing:-0.300px;transform:scaleX(0.9769);transform-origin:0 0;">Has Old Extra Data</span>
<span class="t" style="left:148px;top:558.84px;font-size:12px;line-height:14px;color:#7d7d7d;letter-spacing:0.438px;">bool</span>
<span class="t" style="left:249px;top:558.84px;font-size:12px;line-height:14px;color:#7d7d7d;letter-spacing:-0.300px;transform:scaleX(0.9189);transform-origin:0 0;">no</span>
<span class="t" style="left:24px;top:573.84px;font-size:12px;line-height:14px;color:#7d7d7d;letter-spacing:-0.225px;">Old Extra Prop Name</span>
<span class="t" style="left:148px;top:573.84px;font-size:12px;line-height:14px;color:#7d7d7d;letter-spacing:0.131px;">string</span>
<span class="t" style="left:24px;top:588.84px;font-size:12px;line-height:14px;color:#7d7d7d;letter-spacing:-0.186px;">Old Extra Internal Id</span>
<span class="t" style="left:148px;top:588.84px;font-size:12px;line-height:14px;color:#7d7d7d;letter-spacing:0.547px;">uint</span>
<span class="t" style="left:249px;top:588.84px;font-size:12px;line-height:14px;color:#7d7d7d;">0</span>
<span class="t" style="left:24px;top:603.84px;font-size:12px;line-height:14px;color:#7d7d7d;letter-spacing:-0.300px;transform:scaleX(0.9975);transform-origin:0 0;">Old Extra String</span>
<span class="t" style="left:148px;top:603.84px;font-size:12px;line-height:14px;color:#7d7d7d;letter-spacing:0.131px;">string</span>
<span class="t" style="left:24px;top:618.84px;font-size:12px;line-height:14px;color:#7d7d7d;letter-spacing:-0.034px;">Unknown Byte</span>
<span class="t" style="left:148px;top:618.84px;font-size:12px;line-height:14px;color:#7d7d7d;letter-spacing:0.104px;">byte</span>
<span class="t" style="left:249px;top:618.84px;font-size:12px;line-height:14px;color:#7d7d7d;">0</span>
<span class="t" style="left:24px;top:633.84px;font-size:12px;line-height:14px;color:#7d7d7d;letter-spacing:-0.300px;transform:scaleX(0.9444);transform-origin:0 0;">Extra Data</span>
<span class="t" style="left:148px;top:633.84px;font-size:12px;line-height:14px;color:#7d7d7d;letter-spacing:0.041px;">Ref&lt;NiExtraData&gt;</span>
<span class="t" style="left:249px;top:633.84px;font-size:12px;line-height:14px;color:#7d7d7d;letter-spacing:-0.229px;">None</span>
<span class="t" style="left:24px;top:648.84px;font-size:12px;line-height:14px;color:#fff;letter-spacing:-0.243px;">Num Extra Data List</span>
<span class="t" style="left:148px;top:648.84px;font-size:12px;line-height:14px;color:#fff;letter-spacing:0.547px;">uint</span>
<span class="t" style="left:24px;top:663.84px;font-size:12px;line-height:14px;color:#000;letter-spacing:-0.300px;transform:scaleX(0.9798);transform-origin:0 0;">Extra Data List</span>
<span class="t" style="left:148px;top:663.84px;font-size:12px;line-height:14px;color:#000;letter-spacing:0.041px;">Ref&lt;NiExtraData&gt;</span>
<span class="t" style="left:24px;top:678.84px;font-size:12px;line-height:14px;color:#000;letter-spacing:0.108px;">Controller</span>
<span class="t" style="left:148px;top:678.84px;font-size:12px;line-height:14px;color:#000;letter-spacing:-0.041px;">Ref&lt;NiTimeCo...</span>
<span class="t" style="left:249px;top:678.84px;font-size:12px;line-height:14px;color:#000;letter-spacing:-0.229px;">None</span>
<span class="t" style="left:24px;top:693.84px;font-size:12px;line-height:14px;color:#000;letter-spacing:-0.300px;transform:scaleX(0.9594);transform-origin:0 0;">Flags</span>
<span class="t" style="left:148px;top:693.84px;font-size:12px;line-height:14px;color:#000;letter-spacing:-0.300px;transform:scaleX(0.9594);transform-origin:0 0;">Flags</span>
<span class="t" style="left:24px;top:708.84px;font-size:12px;line-height:14px;color:#000;letter-spacing:-0.147px;">Unknown Short 1</span>
<span class="t" style="left:148px;top:708.84px;font-size:12px;line-height:14px;color:#000;letter-spacing:0.128px;">ushort</span>
<span class="t" style="left:249px;top:708.84px;font-size:12px;line-height:14px;color:#000;">8</span>
<span class="t" style="left:24px;top:723.84px;font-size:12px;line-height:14px;color:#000;letter-spacing:-0.092px;">Translation</span>
<span class="t" style="left:148px;top:723.84px;font-size:12px;line-height:14px;color:#000;letter-spacing:-0.284px;">Vector3</span>
<span class="t" style="left:249px;top:723.84px;font-size:12px;line-height:14px;color:#000;letter-spacing:-0.300px;transform:scaleX(0.9424);transform-origin:0 0;">X 0.0000 Y 0.0000 Z 0.0000</span>
<span class="t" style="left:24px;top:738.84px;font-size:12px;line-height:14px;color:#000;letter-spacing:-0.100px;">Rotation</span>
<span class="t" style="left:148px;top:738.84px;font-size:12px;line-height:14px;color:#000;letter-spacing:-0.145px;">Matrix33</span>
<span class="t" style="left:249px;top:738.84px;font-size:12px;line-height:14px;color:#000;letter-spacing:-0.300px;transform:scaleX(0.9586);transform-origin:0 0;">Y -0.00 P 0.00 R -0.00</span>
<span class="t" style="left:264px;top:543.84px;font-size:12px;line-height:14px;color:#000;letter-spacing:-0.261px;">Scene Root [0]</span>
<span class="t" style="left:264px;top:693.84px;font-size:12px;line-height:14px;color:#000;letter-spacing:-0.300px;transform:scaleX(0.9189);transform-origin:0 0;">14</span>
<span class="t" style="left:248.5px;top:648.84px;font-size:12px;line-height:14px;color:#000;">1</span>
<span class="t" style="left:764px;top:663.84px;font-size:12px;line-height:14px;color:#000;letter-spacing:-0.300px;transform:scaleX(0.9937);transform-origin:0 0;">Num Extra Data...</span>
<span class="t" style="left:963px;top:528.84px;font-size:12px;line-height:14px;color:#7d7d7d;letter-spacing:-0.255px;">BSLightingShad...</span>
<span class="t" style="left:963px;top:573.84px;font-size:12px;line-height:14px;color:#7d7d7d;letter-spacing:-0.300px;transform:scaleX(0.9716);transform-origin:0 0;">Has Old Extra D...</span>
<span class="t" style="left:963px;top:588.84px;font-size:12px;line-height:14px;color:#7d7d7d;letter-spacing:-0.300px;transform:scaleX(0.9716);transform-origin:0 0;">Has Old Extra D...</span>
<span class="t" style="left:963px;top:603.84px;font-size:12px;line-height:14px;color:#7d7d7d;letter-spacing:-0.300px;transform:scaleX(0.9716);transform-origin:0 0;">Has Old Extra D...</span>
<span class="t" style="left:1063px;top:633.84px;font-size:12px;line-height:14px;color:#7d7d7d;letter-spacing:-0.300px;transform:scaleX(0.8702);transform-origin:0 0;">3.0</span>
<span class="t" style="left:1063px;top:648.84px;font-size:12px;line-height:14px;color:#fff;letter-spacing:-0.300px;transform:scaleX(0.9207);transform-origin:0 0;">10.0.1.0</span>
<span class="t" style="left:1063px;top:663.84px;font-size:12px;line-height:14px;color:#000;letter-spacing:-0.300px;transform:scaleX(0.9207);transform-origin:0 0;">10.0.1.0</span>
<span class="t" style="left:1063px;top:678.84px;font-size:12px;line-height:14px;color:#000;letter-spacing:-0.300px;transform:scaleX(0.8702);transform-origin:0 0;">3.0</span>
<span class="t" style="left:1063px;top:693.84px;font-size:12px;line-height:14px;color:#000;letter-spacing:-0.300px;transform:scaleX(0.8702);transform-origin:0 0;">3.0</span>
<span class="t" style="left:1063px;top:708.84px;font-size:12px;line-height:14px;color:#000;letter-spacing:-0.300px;transform:scaleX(0.9207);transform-origin:0 0;">20.2.0.7</span>
<span class="t" style="left:1163px;top:558.84px;font-size:12px;line-height:14px;color:#7d7d7d;letter-spacing:-0.300px;transform:scaleX(0.8702);transform-origin:0 0;">2.3</span>
<span class="t" style="left:1163px;top:573.84px;font-size:12px;line-height:14px;color:#7d7d7d;letter-spacing:-0.300px;transform:scaleX(0.8702);transform-origin:0 0;">2.3</span>
<span class="t" style="left:1163px;top:588.84px;font-size:12px;line-height:14px;color:#7d7d7d;letter-spacing:-0.300px;transform:scaleX(0.8702);transform-origin:0 0;">2.3</span>
<span class="t" style="left:1163px;top:603.84px;font-size:12px;line-height:14px;color:#7d7d7d;letter-spacing:-0.300px;transform:scaleX(0.8702);transform-origin:0 0;">2.3</span>
<span class="t" style="left:1163px;top:618.84px;font-size:12px;line-height:14px;color:#7d7d7d;letter-spacing:-0.300px;transform:scaleX(0.8702);transform-origin:0 0;">2.3</span>
<span class="t" style="left:1163px;top:633.84px;font-size:12px;line-height:14px;color:#7d7d7d;letter-spacing:-0.300px;transform:scaleX(0.9168);transform-origin:0 0;">4.2.2.0</span>
<span class="t" style="left:327.5px;top:609.57px;font-size:20px;line-height:22px;color:#e61c24;letter-spacing:0.674px;font-weight:bold;">tape "1"</span>
<svg class="a" style="left:0;top:0" width="1280" height="768" viewBox="0 0 1280 768" fill="none" stroke="#ed1c24">
 <rect x="3.700" y="126.900" width="465.600" height="30.300" stroke-width="5.400"/>
 <rect x="244.450" y="508.450" width="48.300" height="19.100" stroke-width="4.400"/>
 <path d="M256.400 532 L257 560 L257.900 590 L258.800 619" stroke-width="4.800" stroke-linecap="butt"/>
 <path d="M241.500 607.800 L258.600 619.600 L271.800 603.800" stroke-width="4.800" stroke-linecap="round" stroke-linejoin="round"/>
 <rect x="233.650" y="640.400" width="42.800" height="28.100" stroke-width="4.800"/>
 <path d="M15 663.500 Q60 665.500 133 665" stroke-width="3" stroke-linecap="round"/>
</svg>

</body></html>
